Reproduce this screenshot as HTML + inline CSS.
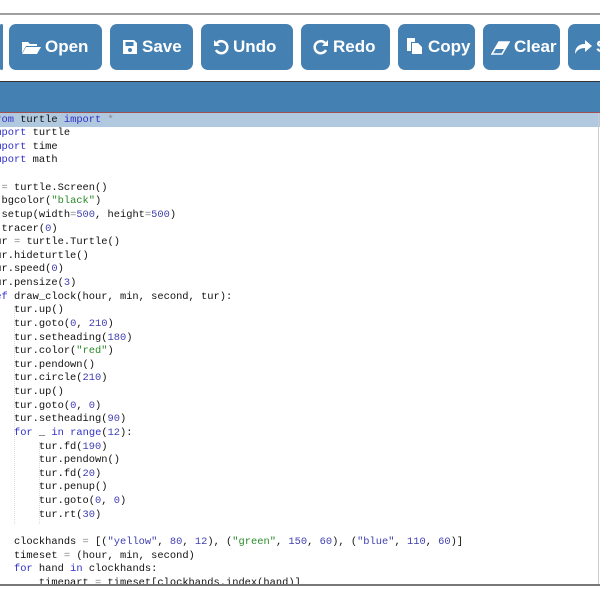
<!DOCTYPE html>
<html><head><style>
html,body{margin:0;width:600px;height:600px;overflow:hidden}
body{background:#fff;position:relative;font-family:"Liberation Sans",sans-serif}
.wrap{position:absolute;left:0;top:0;width:600px;height:600px;overflow:hidden}
.topline{position:absolute;left:0;top:13px;width:600px;height:2px;background:#a0a0a0}
.btn{position:absolute;top:24px;height:46px;background:#4480b2;border-radius:7px;color:#fff;font-weight:bold;font-size:17px;line-height:46px;box-sizing:border-box;padding-left:12px;white-space:nowrap;overflow:hidden}
.btn svg{vertical-align:-3px;margin-right:4px}
.bar{position:absolute;left:0;top:81px;width:600px;height:31px;background:#4480b2;border-top:1px solid #333}
.red{position:absolute;left:0;top:112px;width:600px;height:1px;background:#a05050}
.hl{position:absolute;left:0;top:113px;width:600px;height:14px;background:#b0c9df}
.code{position:absolute;left:-11px;top:113.5px;font-family:"Liberation Mono",monospace;font-size:10.4px;line-height:13.62px;white-space:pre;color:#111}
.k{color:#3030c8}.n{color:#4040b0}.s{color:#2a8a2a}.o{color:#888}
.guide{position:absolute;width:0;border-left:1px dotted #ddd}
.bottom{position:absolute;left:0;top:584px;width:600px;height:2px;background:#777}
.right{position:absolute;left:598px;top:113px;width:1px;height:471px;background:#ccc}
</style></head><body><div class="wrap">
<div class="topline"></div>
<div class="btn" style="left:0;width:3px;padding:0"></div>
<div class="btn" style="left:9px;width:93px"><svg width="20" height="16" viewBox="0 0 20 16"><path d="M1 3h6l2 2h7v2H5L1 14z" fill="#fff"/><path d="M5 8h15l-4 7H1z" fill="#fff"/></svg>Open</div>
<div class="btn" style="left:110px;width:83px"><svg width="16" height="16" viewBox="0 0 16 16"><path d="M1 1h11l3 3v11H1z" fill="#fff"/><rect x="3.5" y="3" width="8" height="4" fill="#4480b2"/><circle cx="8" cy="11" r="2" fill="#4480b2"/></svg>Save</div>
<div class="btn" style="left:201px;width:92px"><svg width="16" height="16" viewBox="0 0 16 16"><path d="M4 4A6 6 0 1 1 3 11" fill="none" stroke="#fff" stroke-width="2.5"/><path d="M1 1v6h6z" fill="#fff"/></svg>Undo</div>
<div class="btn" style="left:301px;width:89px"><svg width="16" height="16" viewBox="0 0 16 16"><path d="M12 4A6 6 0 1 0 13 11" fill="none" stroke="#fff" stroke-width="2.5"/><path d="M15 1v6H9z" fill="#fff"/></svg>Redo</div>
<div class="btn" style="left:398px;width:77px;padding-left:8px"><svg width="18" height="18" viewBox="0 0 18 18"><path d="M1 1h8v4H5v9H1z" fill="#fff"/><path d="M6 6h6l4 4v7H6z" fill="#fff"/></svg>Copy</div>
<div class="btn" style="left:483px;width:77px;padding-left:8px"><svg width="19" height="14" viewBox="0 0 19 14"><path d="M8 1h10L11 13H1z" fill="none" stroke="#fff" stroke-width="1.6"/><path d="M8 1h10l-4 7H4z" fill="#fff"/></svg>Clear</div>
<div class="btn" style="left:568px;width:32px;padding-left:6px;border-radius:7px 0 0 7px"><svg width="18" height="16" viewBox="0 0 18 16"><path d="M11 1l7 6-7 6V9C6 9 3 11 1 15 1 9 4 5 11 5z" fill="#fff"/></svg>Share</div>
<div class="bar"></div><div class="red"></div><div class="hl"></div>
<div class="guide" style="left:14px;top:306px;height:218px"></div>
<div class="guide" style="left:39px;top:442px;height:82px"></div>
<div class="code"><span class="k">from</span> turtle <span class="k">import</span> <span class="o">*</span>
<span class="k">import</span> turtle
<span class="k">import</span> time
<span class="k">import</span> math

s <span class="o">=</span> turtle.Screen()
s.bgcolor(<span class="s">"black"</span>)
s.setup(width<span class="o">=</span><span class="n">500</span>, height<span class="o">=</span><span class="n">500</span>)
s.tracer(<span class="n">0</span>)
tur <span class="o">=</span> turtle.Turtle()
tur.hideturtle()
tur.speed(<span class="n">0</span>)
tur.pensize(<span class="n">3</span>)
<span class="k">def</span> draw_clock(hour, min, second, tur):
    tur.up()
    tur.goto(<span class="n">0</span>, <span class="n">210</span>)
    tur.setheading(<span class="n">180</span>)
    tur.color(<span class="s">"red"</span>)
    tur.pendown()
    tur.circle(<span class="n">210</span>)
    tur.up()
    tur.goto(<span class="n">0</span>, <span class="n">0</span>)
    tur.setheading(<span class="n">90</span>)
    <span class="k">for</span> _ <span class="k">in</span> <span class="k">range</span>(<span class="n">12</span>):
        tur.fd(<span class="n">190</span>)
        tur.pendown()
        tur.fd(<span class="n">20</span>)
        tur.penup()
        tur.goto(<span class="n">0</span>, <span class="n">0</span>)
        tur.rt(<span class="n">30</span>)

    clockhands <span class="o">=</span> [(<span class="n">"yellow"</span>, <span class="n">80</span>, <span class="n">12</span>), (<span class="s">"green"</span>, <span class="n">150</span>, <span class="n">60</span>), (<span class="n">"blue"</span>, <span class="n">110</span>, <span class="n">60</span>)]
    timeset <span class="o">=</span> (hour, min, second)
    <span class="k">for</span> hand <span class="k">in</span> clockhands:
        timepart <span class="o">=</span> timeset[clockhands.index(hand)]</div>
<div style="position:absolute;left:0;top:586px;width:600px;height:14px;background:#fff"></div>
<div class="bottom"></div>
<div class="right"></div>
</div></body></html>
